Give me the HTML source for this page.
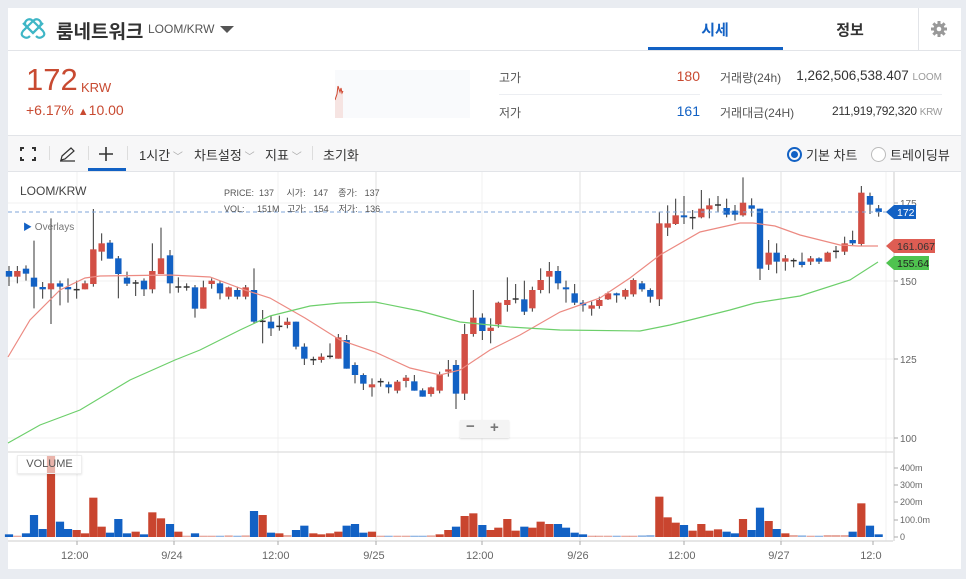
<!DOCTYPE html>
<html><head><meta charset="utf-8"><style>
*{margin:0;padding:0;box-sizing:border-box}
body{width:966px;height:579px;background:#e9ecf1;font-family:"Liberation Sans","Noto Sans CJK KR",sans-serif;position:relative;overflow:hidden;color:#333}
.a{position:absolute;white-space:nowrap}
#panel{position:absolute;left:8px;top:8px;width:953px;height:561px;background:#fff}
</style></head><body>
<div id="panel"></div>
<svg class="a" style="left:20px;top:17px" width="26" height="24" viewBox="0 0 26 24"><g fill="none" stroke="#3fb6c6" stroke-width="2.2"><path d="M3 6 L13 16 L19 10 Q23 6 19 3 Q16 1 13 4 L3 14 Q0 18 4 20 Q7 22 10 19"/><path d="M23 6 L13 16 L7 10 Q3 6 7 3 Q10 1 13 4 L23 14 Q26 18 22 20 Q19 22 16 19"/></g></svg>
<div class="a" style="left:56px;top:17px;font-size:19px;font-weight:bold;color:#333">룸네트워크</div>
<div class="a" style="left:148px;top:22px;font-size:12px;color:#555">LOOM/KRW</div>
<div class="a" style="left:220px;top:26px;width:0;height:0;border-left:7px solid transparent;border-right:7px solid transparent;border-top:7px solid #555"></div>
<div class="a" style="left:648px;top:19px;width:134px;text-align:center;font-size:15px;font-weight:bold;color:#1261c4">시세</div>
<div class="a" style="left:648px;top:47px;width:135px;height:3px;background:#1261c4"></div>
<div class="a" style="left:782px;top:19px;width:136px;text-align:center;font-size:15px;font-weight:bold;color:#333">정보</div>
<div class="a" style="left:918px;top:8px;width:1px;height:42px;background:#e2e4e8"></div>
<svg class="a" style="left:931px;top:21px" width="16" height="16" viewBox="0 0 16 16"><g fill="#999"><circle cx="8" cy="8" r="5.5"/><rect x="6.5" y="0" width="3" height="16"/><rect x="0" y="6.5" width="16" height="3"/><rect x="6.5" y="0" width="3" height="16" transform="rotate(45 8 8)"/><rect x="6.5" y="0" width="3" height="16" transform="rotate(-45 8 8)"/></g><circle cx="8" cy="8" r="2.3" fill="#fff"/></svg>
<div class="a" style="left:8px;top:50px;width:953px;height:1px;background:#e2e4e8"></div>
<div class="a" style="left:26px;top:62px;font-size:31px;color:#c84a31">172</div>
<div class="a" style="left:81px;top:80px;font-size:13px;color:#c84a31">KRW</div>
<div class="a" style="left:26px;top:102px;font-size:14px;color:#c84a31">+6.17% <span style="font-size:11px">▲</span>10.00</div>
<div class="a" style="left:335px;top:70px;width:135px;height:48px;background:#f9fafc"></div>
<svg class="a" style="left:335px;top:78px" width="12" height="40"><path d="M0 40 L0 22 L2 16 L3 8 L5 14 L6 10 L7 15 L8 13 L8 40Z" fill="#f6e4e2"/><path d="M0 22 L2 16 L3 8 L5 14 L6 10 L7 15 L8 13" fill="none" stroke="#d0462e" stroke-width="1"/></svg>
<div class="a" style="left:499px;top:69px;font-size:12px;color:#555">고가</div>
<div class="a" style="left:640px;top:68px;width:60px;text-align:right;font-size:14px;color:#c84a31">180</div>
<div class="a" style="left:499px;top:94px;width:201px;height:1px;background:#eceef2"></div>
<div class="a" style="left:499px;top:104px;font-size:12px;color:#555">저가</div>
<div class="a" style="left:640px;top:103px;width:60px;text-align:right;font-size:14px;color:#1261c4">161</div>
<div class="a" style="left:720px;top:69px;font-size:12px;color:#555">거래량(24h)</div>
<div class="a" style="left:760px;top:68px;width:182px;text-align:right;font-size:13.5px;color:#333">1,262,506,538.407 <span style="font-size:10px;color:#999">LOOM</span></div>
<div class="a" style="left:720px;top:94px;width:222px;height:1px;background:#eceef2"></div>
<div class="a" style="left:720px;top:104px;font-size:12px;color:#555">거래대금(24H)</div>
<div class="a" style="left:760px;top:104px;width:182px;text-align:right;font-size:12px;color:#333;letter-spacing:-0.3px">211,919,792,320 <span style="font-size:10px;color:#999">KRW</span></div>
<div class="a" style="left:8px;top:135px;width:953px;height:37px;background:#f7f7f8;border-top:1px solid #e2e4e8;border-bottom:1px solid #e2e4e8"></div>
<svg class="a" style="left:20px;top:147px" width="16" height="14"><path d="M1 4V1H4M12 1H15V4M15 10V13H12M4 13H1V10" fill="none" stroke="#333" stroke-width="2"/></svg>
<div class="a" style="left:49px;top:146px;width:1px;height:14px;background:#ddd"></div>
<svg class="a" style="left:59px;top:146px" width="17" height="16"><path d="M2 14L3 10L12 2L15 5L6 13Z M1 15H16" fill="none" stroke="#333" stroke-width="1.2"/></svg>
<div class="a" style="left:88px;top:146px;width:1px;height:14px;background:#ddd"></div>
<div class="a" style="left:88px;top:168px;width:38px;height:3px;background:#1261c4"></div>
<svg class="a" style="left:98px;top:146px" width="16" height="16"><path d="M8 1V15M1 8H15" stroke="#333" stroke-width="1.6"/></svg>
<div class="a" style="left:127px;top:146px;width:1px;height:14px;background:#ddd"></div>
<div class="a" style="left:139px;top:145px;font-size:13px;color:#333">1시간<span style="color:#aaa;font-size:10px"> ﹀</span></div>
<div class="a" style="left:194px;top:145px;font-size:13px;color:#333">차트설정<span style="color:#aaa;font-size:10px"> ﹀</span></div>
<div class="a" style="left:265px;top:145px;font-size:13px;color:#333">지표<span style="color:#aaa;font-size:10px"> ﹀</span></div>
<div class="a" style="left:312px;top:146px;width:1px;height:14px;background:#ddd"></div>
<div class="a" style="left:323px;top:145px;font-size:13px;color:#333">초기화</div>
<div class="a" style="left:787px;top:147px;width:15px;height:15px;border-radius:50%;border:2px solid #1261c4"></div>
<div class="a" style="left:791px;top:151px;width:7px;height:7px;border-radius:50%;background:#1261c4"></div>
<div class="a" style="left:806px;top:145px;font-size:13px;color:#333">기본 차트</div>
<div class="a" style="left:871px;top:147px;width:15px;height:15px;border-radius:50%;border:1px solid #bbb;background:#fff"></div>
<div class="a" style="left:890px;top:145px;font-size:13px;color:#333">트레이딩뷰</div>
<svg id="ch" class="a" style="left:0;top:0" width="966" height="579"></svg>
<div class="a" style="left:20px;top:184px;font-size:12px;color:#444">LOOM/KRW</div>
<div class="a" style="left:224px;top:185px;font-size:9px;color:#555;line-height:16px">PRICE:&nbsp; 137 &nbsp;&nbsp;&nbsp; 시가: &nbsp; 147 &nbsp;&nbsp; 종가: &nbsp; 137<br>VOL: &nbsp;&nbsp;&nbsp; 151M &nbsp; 고가: &nbsp; 154 &nbsp;&nbsp; 저가: &nbsp; 136</div>
<div class="a" style="left:23px;top:220px;font-size:10px;color:#777"><span style="color:#1261c4;font-size:9px">▶</span> Overlays</div>
<div class="a" style="left:17px;top:455px;width:65px;height:19px;border:1px solid #eee;box-shadow:0 1px 2px rgba(0,0,0,.1);font-size:11px;color:#555;text-align:center;line-height:17px;background:rgba(255,255,255,.6)">VOLUME</div>
<div class="a" style="left:460px;top:420px;width:49px;height:18px;background:#f4f4f4;box-shadow:0 1px 2px rgba(0,0,0,.12);font-size:15px;color:#777;font-weight:bold"><span style="position:absolute;left:6px;top:-2px">−</span><span style="position:absolute;left:30px;top:-1px">+</span></div>
<script>
var s=document.getElementById('ch'),h='';
function L(x1,y1,x2,y2,c,w,d){h+='<line x1="'+x1+'" y1="'+y1+'" x2="'+x2+'" y2="'+y2+'" stroke="'+c+'" stroke-width="'+(w||1)+'"'+(d?' stroke-dasharray="'+d+'"':'')+'/>';}
function T(x,y,t,c,sz){h+='<text x="'+x+'" y="'+y+'" fill="'+(c||'#555')+'" font-size="'+(sz||10)+'" font-family="Liberation Sans,sans-serif">'+t+'</text>';}
[203,281,359,438].forEach(function(y){L(8,y,893,y,'#f0f0f0');});
[77,174,278,376,482,580,684,781,886].forEach(function(x,i){L(x,172,x,541,i%2?'#e2e2e2':'#f0f0f0');});
L(8,452,893,452,'#ddd',1.2);
L(8,541,893,541,'#ddd',1.5);
L(894,172,894,541,'#ccc');
[[203,'175'],[281,'150'],[359,'125'],[438,'100']].forEach(function(a){L(894,a[0],898,a[0],'#aaa');T(900,a[0]+4,a[1],'#666',10);});
[[468,'400m'],[485,'300m'],[502,'200m'],[520,'100.0m'],[537,'0']].forEach(function(a){L(894,a[0],898,a[0],'#aaa');T(900,a[0]+3,a[1],'#666',9);});
[[77,'12:00'],[174,'9/24'],[278,'12:00'],[376,'9/25'],[482,'12:00'],[580,'9/26'],[684,'12:00'],[781,'9/27'],[873,'12:0']].forEach(function(a){L(a[0],541,a[0],545,'#aaa');T(a[0]-(a[1].length*3.2),559,a[1],'#666',11);});
var A=[[27,303,320,'b',288,348],[52,303,320,'r',288,340],[78,296,311,'b',286,332],[102,323,350,'b',212,415],[128,351,358,'b',336,386],[153,340,358,'r',145,462],[180,340,350,'b',332,406],[204,351,358,'b',325,398],[230,359,361,'d',332,386],[255,340,358,'r',332,358],[280,238,342,'r',117,350],[305,220,245,'r',190,272],[330,218,266,'b',210,266],[355,265,312,'b',258,385],[381,323,341,'b',305,348],[407,339,341,'d',330,378],[432,332,358,'b',325,378],[457,303,358,'r',220,370],[483,265,312,'r',173,312],[510,256,340,'b',240,370],[535,351,353,'d',322,368],[560,351,353,'d',340,362],[585,352,416,'b',345,443],[610,352,416,'r',332,416],[635,332,342,'r',325,356],[660,340,370,'b',332,388],[686,352,380,'r',350,388],[712,360,380,'b',350,388],[737,352,380,'r',345,388],[762,360,455,'b',295,462],[788,454,456,'d',420,520],[813,455,475,'b',437,498],[838,469,471,'d',437,482],[862,455,465,'r',443,475],[888,455,530,'b',455,538],[913,530,566,'b',520,585],[940,569,571,'d',560,585],[964,560,570,'r',550,578],[990,559,561,'d',520,566],[1015,502,566,'r',492,566],[1040,510,596,'b',495,596],[1065,585,615,'b',577,640],[1090,615,641,'b',610,660],[1116,643,652,'r',625,680],[1142,635,637,'d',625,650],[1166,643,652,'b',635,670],[1192,635,662,'r',630,670],[1218,623,633,'r',615,652],[1243,634,662,'b',615,662],[1268,661,680,'b',655,680],[1293,652,672,'r',650,680],[1319,615,662,'r',605,670],[1345,598,605,'r',570,620],[1368,585,671,'b',570,717],[1394,492,671,'r',462,690],[1420,443,492,'r',360,500]];
var B=[[7,443,483,'b',430,510],[32,473,483,'r',445,520],[55,398,463,'r',395,473],[82,390,405,'r',322,425],[107,387,389,'d',342,400],[133,388,425,'b',332,435],[157,360,415,'r',350,425],[182,330,360,'r',295,370],[208,303,320,'r',276,370],[234,303,340,'b',288,358],[258,352,358,'b',332,398],[284,370,398,'b',342,405],[309,398,406,'b',390,425],[335,406,416,'r',395,437],[358,390,408,'r',380,416],[384,370,388,'r',365,390],[410,370,376,'b',368,398],[436,360,380,'r',356,388],[460,330,373,'r',325,380],[486,340,358,'b',333,365],[511,360,380,'b',355,398],[538,160,388,'r',125,408],[563,160,173,'r',106,198],[587,136,162,'r',86,165],[612,136,142,'b',78,162],[638,143,145,'d',120,178],[664,116,142,'r',60,145],[688,106,118,'r',85,145],[714,105,107,'d',78,125],[740,114,134,'b',86,142],[765,122,134,'b',105,152],[789,98,136,'r',22,140],[815,106,116,'b',85,140],[840,116,296,'b',116,330],[866,248,284,'r',210,300],[890,248,275,'b',220,310],[916,265,275,'r',255,302],[941,272,274,'d',265,292],[966,275,285,'b',248,292],[992,265,275,'r',258,285],[1017,265,275,'b',262,282],[1043,248,275,'r',245,275],[1068,244,246,'d',228,265],[1094,220,245,'r',200,255],[1118,210,220,'b',182,225],[1144,68,222,'r',48,228],[1170,78,104,'b',68,132],[1196,115,126,'b',105,140]];
var C={r:'#d24f45',b:'#1261c4',d:'#333'};
function cd(x,t,b,c,wt,wb){L(x,wt,x,wb,'#333',1);if(c=='d'){L(x-3,t,x+3,t,'#333',1.5);}else{h+='<rect x="'+(x-3.2)+'" y="'+t+'" width="6.4" height="'+Math.max(b-t,2)+'" fill="'+C[c]+'"/>';}}
var X=[];
A.forEach(function(a){var x=a[0]/3;X.push(x);cd(x,170+a[1]/3,170+a[2]/3,a[3],170+a[4]/3,170+a[5]/3);});
B.forEach(function(a){var x=480+a[0]/3;X.push(x);cd(x,170+a[1]/3,170+a[2]/3,a[3],170+a[4]/3,170+a[5]/3);});
var V=[1093,1097,1090,1035,1077,858,1055,1077,1080,1090,983,1070,1088,1047,1090,1085,1093,1027,1045,1062,1085,1097,1090,1097,1097,1097,1096,1097,1096,1023,1035,1088,1090,1095,1080,1067,1090,1093,1090,1085,1067,1062,1088,1085,1097,1097,1097,1097,1097,1097,1096,1093,1080,1070,1038,1030,1065,1080,1073,1047,1082,1070,1073,1055,1062,1062,1073,1088,1093,1097,1097,1097,1097,1097,1097,1096,1095,980,1042,1058,1065,1082,1062,1082,1078,1085,1090,1047,1080,1013,1053,1077,1090,1095,1096,1097,1097,1095,1095,1095,1085,1000,1067,1093];
var cols=A.concat(B).map(function(a){return a[3]});
V.forEach(function(v,i){var top=170+v/3,c=cols[i]=='b'?'#1261c4':'#c9452f';var op=(1100-v)<6?0.45:1;h+='<rect x="'+(X[i]-4.1)+'" y="'+top+'" width="8.2" height="'+Math.max(537-top,1)+'" fill="'+c+'" opacity="'+op+'"/>';});
function P(pts,c){h+='<polyline fill="none" stroke="'+c+'" stroke-width="1.2" points="'+pts.map(function(p){return p.join(',')}).join(' ')+'"/>';}
P([[8,357],[30,320],[60,290],[85,278],[100,276],[170,275],[210,277],[245,290],[270,298],[305,318],[340,340],[375,352],[410,368],[440,375],[460,370],[490,350],[520,335],[560,312],[580,305],[600,298],[630,278],[660,255],[700,232],[740,223],[753,223],[775,226],[800,235],[840,245],[858,246],[878,246]],'#ec8a82');
P([[8,443],[40,425],[80,410],[130,380],[175,360],[200,350],[240,330],[270,316],[310,306],[340,303],[375,302],[420,311],[460,322],[510,327],[560,330],[640,331],[670,325],[730,310],[755,303],[800,296],[850,280],[878,262]],'#6dcf6b');
L(8,212,893,212,'#7fa6d9',1,'4,3');
function tag(y,txt,bg,fc,w){h+='<path d="M886 '+y+' L894 '+(y-7)+' L'+(894+w)+' '+(y-7)+' L'+(894+w)+' '+(y+7)+' L894 '+(y+7)+'Z" fill="'+bg+'"/>';T(897,y+4,txt,fc,10.5);}
tag(212,'172','#1261c4','#fff',22);
tag(246,'161.067','#de5d53','#333',41);
tag(263,'155.64','#4fc34f','#222',35);
s.innerHTML=h;
</script>
</body></html>
